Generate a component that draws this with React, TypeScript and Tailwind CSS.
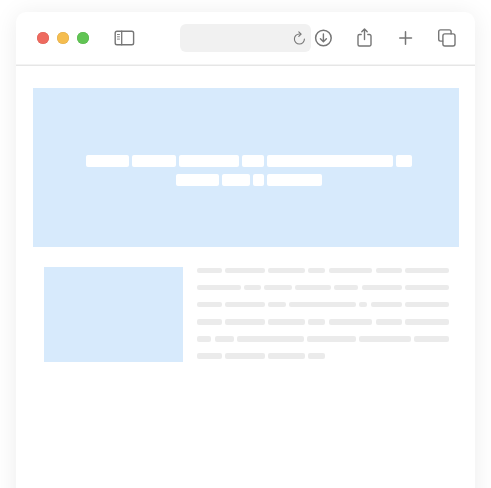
import React from "react";

const heroLines = [
  { indent: 53, widths: [43, 43.5, 60.5, 22, 125.5, 16] },
  { indent: 143, widths: [43, 27.5, 11, 55] },
];

const paragraph = [
  [25, 39.3, 37, 17.3, 43.5, 26, 43.7],
  [43.7, 17, 27.5, 36, 24, 40, 43.7],
  [25, 39.3, 18, 66.7, 8.3, 31, 43.7],
  [25, 39.3, 37, 17.3, 43.5, 26, 43.7],
  [14.3, 19, 67, 48.5, 52, 35],
  [25, 39.3, 37, 17.3],
];

function Icon({ width, height, children, className = "" }: {
  width: number; height: number; children: React.ReactNode; className?: string;
}) {
  return (
    <svg width={width} height={height} viewBox={`0 0 ${width} ${height}`} fill="none"
      stroke="#767676" strokeWidth="1.5" strokeLinecap="round" strokeLinejoin="round"
      className={`block shrink-0 ${className}`}>
      {children}
    </svg>
  );
}

function Toolbar() {
  return (
    <header className="flex h-[54px] items-center border-b border-[#e6e6e6] pb-px pl-[21px] shadow-[inset_0_-1px_0_#f3f3f3]">
      <div className="flex gap-2">
        <span className="size-3 rounded-full bg-[#ee6a5f] ring-[0.5px] ring-inset ring-[#dc6056]" />
        <span className="size-3 rounded-full bg-[#f5bd4f] ring-[0.5px] ring-inset ring-[#dfac49]" />
        <span className="size-3 rounded-full bg-[#61c454] ring-[0.5px] ring-inset ring-[#57b34b]" />
      </div>
      <Icon width={22} height={18} className="ml-6">
        <rect x="2.2" y="2.2" width="18.4" height="13.6" rx="1.8" strokeWidth="1.4" />
        <path d="M8.7 2.2v13.6" strokeWidth="1.3" />
        <path d="M4.4 5.5h2.1M4.4 7.8h2.1M4.4 10.1h2.1" strokeWidth="0.9" />
      </Icon>
      <div className="ml-[45px] flex h-7 w-[131px] items-center justify-end rounded-[6px] bg-[#f1f1f1] pr-[5px]">
        <Icon width={14} height={16}>
          <path d="M8.7 4H7.4a5 5 0 1 0 5 5" strokeWidth="1.1" />
          <path d="M6.8 1.8 9.1 4.1 6.8 6.4" strokeWidth="1.1" />
        </Icon>
      </div>
      <Icon width={20} height={20} className="ml-[2px]">
        <circle cx="10.4" cy="10" r="7.8" />
        <path d="M10.4 6v7.5M7.4 10.7l3 3 3-3" strokeWidth="1.4" />
      </Icon>
      <Icon width={18} height={22} className="ml-6">
        <path d="M4.2 7.5H2.5A1.5 1.5 0 0 0 1 9v8.5A1.5 1.5 0 0 0 2.5 19h10a1.5 1.5 0 0 0 1.5-1.5V9a1.5 1.5 0 0 0-1.5-1.5h-1.7M7.5 12.6V2.2M4.8 4.7l2.7-2.8 2.7 2.8" strokeWidth="1.4" />
      </Icon>
      <Icon width={16} height={16} className="ml-6">
        <path d="M6.5 1.7v12.6M0.7 8h11.8" />
      </Icon>
      <Icon width={22} height={22} className="ml-[22px]">
        <path d="M5.7 14.1H3.5a1.8 1.8 0 0 1-1.8-1.8V4.7a1.8 1.8 0 0 1 1.8-1.8h8.8a1.8 1.8 0 0 1 1.8 1.8v2.2" strokeWidth="1.4" />
        <rect x="5.9" y="6.9" width="12.1" height="12.1" rx="2" strokeWidth="1.4" />
      </Icon>
    </header>
  );
}

export default function App() {
  return (
    <div className="h-[488px] w-[491px] overflow-hidden bg-white pl-4 pt-3">
      <div className="h-[520px] w-[459px] rounded-[10px] bg-white shadow-[0_2px_24px_rgba(0,0,0,0.08)]">
        <Toolbar />
        <main className="px-[17px] pt-[22px]">
          <section className="flex h-[159px] w-[426.4px] flex-col gap-[7px] bg-[#d7eafc] pt-[67px]">
            {heroLines.map((line, i) => (
              <div key={i} className="flex gap-[3.1px]" style={{ paddingLeft: line.indent }}>
                {line.widths.map((w, j) => (
                  <span key={j} className="h-3 shrink-0 rounded-[2px] bg-white" style={{ width: w }} />
                ))}
              </div>
            ))}
          </section>
          <section className="flex gap-[14px] pl-[11px] pt-5">
            <div className="h-[95px] w-[139px] shrink-0 bg-[#d7eafc]" />
            <div className="flex flex-col gap-[11.7px] pt-[0.9px]">
              {paragraph.map((line, i) => (
                <div key={i} className="flex gap-[3.3px]">
                  {line.map((w, j) => (
                    <span key={j} className="h-[5.4px] shrink-0 rounded-[2px] bg-[#ebebeb]" style={{ width: w }} />
                  ))}
                </div>
              ))}
            </div>
          </section>
        </main>
      </div>
    </div>
  );
}
